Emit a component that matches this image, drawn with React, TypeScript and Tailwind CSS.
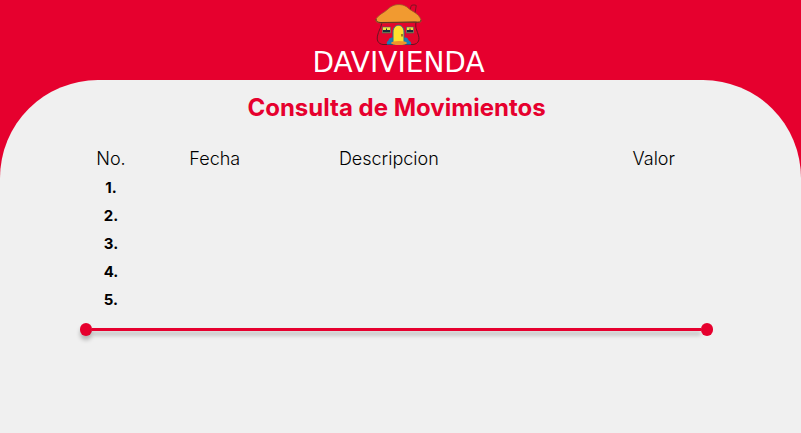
const rows = [1, 2, 3, 4, 5];

function House() {
  return (
    <svg viewBox="0 0 48 42" className="h-[42px] w-12" aria-hidden="true">
      <path d="M35 6 L36 2.5 Q36 1 38 1 L40 1 Q42 1 41 3 L40 9" fill="#e6002e" stroke="#7d1422" strokeWidth="1" />
      <path d="M7 18 C6 24 4 26 3 30 C1 36 3 40 8 40.500 L38 40.500 C44 40 45 35 43 30 C42 26 40 24 41 18 Z" fill="#e3062c" stroke="#641421" strokeWidth="1" />
      <path d="M1 15 C4 10 9 9 13 5 C18 0 26 -1 32 3 C37 8 44 9 46 16 C47 19 44 18 40 18 L6 19 C3 19 0 18 1 15 Z" fill="#f19a30" stroke="#9a5428" strokeWidth="0.800" />
      <path d="M1 15 Q1 18.500 6 18.500 L40 18 Q46 19 46 16" fill="none" stroke="#5c3024" strokeWidth="1" />
      <path d="M12 40.500 C11 37 14 37 14 35 C16 33 19 33 20 35 L28 35 C29 33 32 33 33 35 C33 37 37 37 36 40.500 Z" fill="#1680b8" />
      <path d="M18 38.500 V28 C18 19 29 19 29 28 V38.500 Z" fill="#ffe12d" stroke="#246f93" strokeWidth="1" />
      <path d="M27 30 V32.500" stroke="#86591c" strokeWidth="1.500" />
      <rect x="7.500" y="23" width="8" height="6" fill="#f4df42" stroke="#3f6172" strokeWidth="0.600" />
      <path d="M8 28.500 V26 H11 V24.500 H12 V26 H15 V28.500 Z" fill="#172f3c" />
      <rect x="31.500" y="23" width="7" height="6" fill="#f4df42" stroke="#3f6172" strokeWidth="0.600" />
      <path d="M32 28.500 V26 H34.500 V24.500 H35.500 V26 H38 V28.500 Z" fill="#172f3c" />
      <ellipse cx="24" cy="39" rx="8" ry="2" fill="#ef942b" />
    </svg>
  );
}

function Divider() {
  return (
    <div className="flex items-center" role="separator">
      <span className="h-[13px] w-3 rounded-full bg-[#e6002e] shadow-[0_4px_4px_rgba(0,0,0,0.25)]" />
      <span className="h-[3px] flex-1 bg-[#e6002e] shadow-[0_4px_4px_rgba(0,0,0,0.25)]" />
      <span className="relative h-[13px] w-3 rounded-full bg-[#e6002e]" />
    </div>
  );
}

export default function App() {
  return (
    <div className="flex min-h-screen flex-col bg-[#e6002e] font-['Inter',sans-serif] text-black">
      <header className="flex h-20 flex-col items-center pt-1 pr-1">
        <House />
        <span className="font-['DejaVu_Sans',sans-serif] text-[28px] leading-[34px] text-white">DAVIVIENDA</span>
      </header>
      <main className="flex-1 rounded-t-[98px] bg-[#f0f0f0] pt-3 pr-[88px] pl-20">
        <h1 className="text-center text-2xl leading-8 font-bold text-[#e6002e]">Consulta de Movimientos</h1>
        <table className="mt-5 mb-[9px] w-full table-fixed border-collapse">
          <thead>
            <tr className="h-[30px] text-lg">
              <th scope="col" className="w-[62px] p-0 font-light">No.</th>
              <th scope="col" className="w-[23%] p-0 font-light">Fecha</th>
              <th scope="col" className="w-[32%] p-0 font-light">Descripcion</th>
              <th scope="col" className="p-0 pr-[38px] text-right font-light">Valor</th>
            </tr>
          </thead>
          <tbody>
            {rows.map((n) => (
              <tr key={n} className="h-7 text-[15px] leading-5">
                <th scope="row" className="p-0 font-bold">{n}.</th>
                <td />
                <td />
                <td />
              </tr>
            ))}
          </tbody>
        </table>
        <Divider />
      </main>
    </div>
  );
}
